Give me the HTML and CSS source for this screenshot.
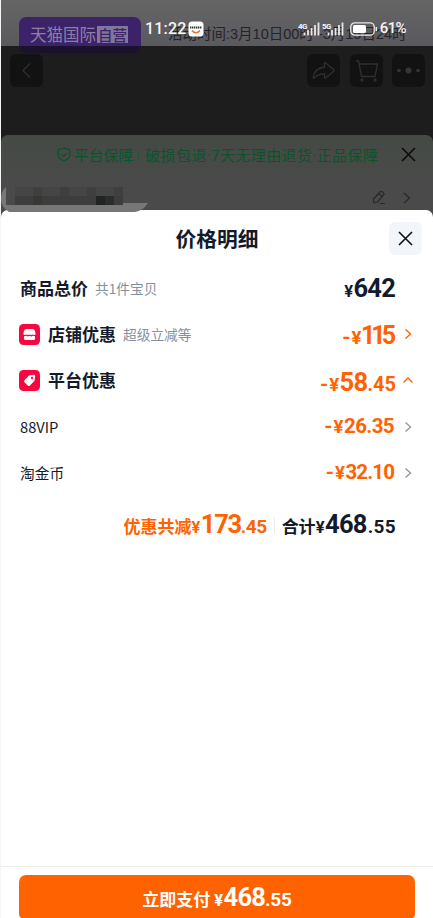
FILE: index.html
```html
<!DOCTYPE html>
<html lang="zh-CN">
<head>
<meta charset="utf-8">
<title>价格明细</title>
<link rel="stylesheet" href="styles.css">
</head>
<body>
<div class="screen">
  <div class="backdrop">
    <div class="promo">
      <div class="badge"><span>天猫国际</span><b>自营</b></div>
      <div class="promo-time">活动时间:3月10日00时 -3月15日24时</div>
    </div>
    <div class="status">
      <span class="clock">11:22</span>
      <svg class="app" width="16" height="16" viewBox="0 0 16 16"><rect x=".5" y=".5" width="15" height="15" rx="3.5" fill="#fff"/><path d="M2 6.500h12" stroke="#333" stroke-width="1.800" stroke-dasharray="1.400 .6"/><path d="M4 9.500q4 4.500 8 0" fill="none" stroke="#e87532" stroke-width="1.700"/></svg>
      <svg class="signal" width="22" height="16" viewBox="0 0 22 16"><text x="0" y="7.500">4G</text><path d="M6.500 14.500v-3M10 14.500V9M13.500 14.500V7M17 14.500V4M20.500 14.500V1.500"/></svg>
      <svg class="signal" width="22" height="16" viewBox="0 0 22 16"><text x="0" y="7.500">5G</text><path d="M6.500 14.500v-3M10 14.500V9M13.500 14.500V7M17 14.500V4M20.500 14.500V1.500"/></svg>
      <svg class="battery" width="28" height="14" viewBox="0 0 28 14"><rect x=".8" y=".8" width="23.400" height="12.400" rx="4" fill="none" stroke="#e8e8e8" stroke-width="1.300"/><rect x="3" y="3" width="13" height="8" rx="1.500" fill="#fff"/><path d="M26.300 5v4" stroke="#e8e8e8" stroke-width="1.500"/></svg>
      <span class="percent">61%</span>
    </div>
    <div class="nav">
      <span class="nav-btn back"><svg width="33" height="33" viewBox="0 0 33 33"><path d="M20 9.500l-7 7 7 7"/></svg></span>
      <span class="nav-btn"><svg width="33" height="33" viewBox="0 0 33 33"><path d="M17.500 9.500q0-1.600 1.300-.6l7.700 6.600q1 1 0 2l-7.700 6.300q-1.300 1-1.300-.6v-3.400c-4.500 0-7.500.8-10.300 4.200-.6.600-1 .3-.9-.5.500-5.500 4.500-9.500 11.200-10.500z"/></svg></span>
      <span class="nav-btn"><svg width="33" height="33" viewBox="0 0 33 33"><path d="M6 7h2.500l3 15.500H25L27.500 10H9.500"/><circle cx="12" cy="26" r="1"/><circle cx="25" cy="26" r="1"/></svg></span>
      <span class="nav-btn"><svg width="33" height="33" viewBox="0 0 33 33"><g fill="#353535" stroke="none"><circle cx="7" cy="16.500" r="1.800"/><circle cx="16.500" cy="16.500" r="3"/><circle cx="26" cy="16.500" r="1.800"/></g></svg></span>
    </div>
    <div class="panel">
      <div class="guarantee">
        <svg width="14" height="15" viewBox="0 0 14 15"><path d="M7 1L1.200 3v5c0 3 2.500 4.800 5.800 6 3.300-1.200 5.800-3 5.800-6V3z"/><path d="M4 7l2.500 2.500L10.300 6"/></svg>
        <span>平台保障</span><i></i><span class="terms">破损包退·7天无理由退货·正品保障</span>
        <svg class="close-dark" width="15" height="15" viewBox="0 0 15 15"><path d="M1 1l13 13M14 1L1 14"/></svg>
      </div>
      <div class="address">
        <div class="mosaic"><i></i><i></i><i></i><i></i><i></i><i></i><i></i><i></i><i></i><i></i><i></i><i></i><i></i><i></i><i></i><i></i><i></i><i></i><i></i><i></i><i></i><i></i><i></i><i></i></div>
        <svg width="14" height="15" viewBox="0 0 14 15"><path d="M1.500 9L8 1.800q1-1 2.200 0l1.300 1q1 1 .2 2L5.500 12l-3.800.8zM6.500 3.500l3.500 3M8 13.500h5"/></svg>
        <svg width="8" height="12" viewBox="0 0 8 12"><path d="M1 1l5.500 5L1 11"/></svg>
      </div>
      <svg class="smudge" width="147" height="25" viewBox="0 0 147 25"><path d="M5 0v16h142q-5 8-13 9H8Q0 20 0 12 0 4 5 0z" fill="#777"/></svg>
    </div>
  </div>

  <main class="sheet">
    <header class="title"><h1>价格明细</h1><button class="close"><svg width="15" height="15" viewBox="0 0 15 15"><path d="M1 1l13 13M14 1L1 14"/></svg></button></header>
    <section class="rows">
      <div class="row"><strong>商品总价</strong><small>共1件宝贝</small><div class="price dark"><span class="yen">¥</span><span class="big">642</span></div></div>
      <div class="row">
        <svg class="icon" width="21" height="21" viewBox="0 0 21 21"><rect width="21" height="21" rx="4.500" fill="#fb0540"/><path d="M7.500 5h6q2 0 2.500 2l.6 2.500q0 1.500-1.500 1.500l-1.300-.6-1.600.7-1.700-.7-1.700.7-1.600-.7-1.300.6q-1.500 0-1.500-1.500L5 7q.5-2 2.500-2zM5 12.200l2.200-.4 1.600.7 1.700-.7 1.700.7 1.600-.7 2.200.4v2.300q0 1.500-1.500 1.500h-8Q5 16 5 14.500z" fill="#fff"/></svg>
        <strong>店铺优惠</strong><small>超级立减等</small>
        <div class="price low"><span class="minus">-</span><span class="yen mid">¥</span><span class="big ones">115</span></div>
        <svg class="arrow hot" width="8" height="12" viewBox="0 0 8 12"><path d="M1.500 1.500l5 4.500-5 4.500"/></svg>
      </div>
      <div class="row">
        <svg class="icon" width="21" height="21" viewBox="0 0 21 21"><rect width="21" height="21" rx="4.500" fill="#fb0540"/><path fill-rule="evenodd" d="M10.800 5.200l4-.4q1.300 0 1.300 1.300l-.4 4q0 .6-.6 1.100l-4.200 4.200q-1.200 1-2.300 0l-3-3q-1-1.200 0-2.300l4.200-4.300q.4-.5 1-.6zM13 6.800a1.200 1.200 0 1 0 .1 0z" fill="#fff"/></svg>
        <strong>平台优惠</strong>
        <div class="price low"><span class="minus">-</span><span class="yen mid">¥</span><span class="big">58</span><span class="cents">.45</span></div>
        <svg class="arrow hot up" width="12" height="8" viewBox="0 0 12 8"><path d="M1.500 6.500L6 2l4.500 4.500"/></svg>
      </div>
      <div class="row"><span class="name">88VIP</span><div class="price"><span class="minus">-</span><span class="yen mid">¥</span><span class="plain">26.35</span></div><svg class="arrow far" width="8" height="12" viewBox="0 0 8 12"><path d="M1.500 1.500l5 4.500-5 4.500"/></svg></div>
      <div class="row"><span class="name">淘金币</span><div class="price"><span class="minus">-</span><span class="yen mid">¥</span><span class="plain tight">32.10</span></div><svg class="arrow far" width="8" height="12" viewBox="0 0 8 12"><path d="M1.500 1.500l5 4.500-5 4.500"/></svg></div>
    </section>
    <div class="total">
      <div class="price"><strong>优惠共减</strong><span class="yen">¥</span><span class="big">173</span><span class="cents">.45</span></div>
      <i></i>
      <div class="price dark"><strong>合计</strong><span class="yen">¥</span><span class="big">468</span><span class="cents">.55</span></div>
    </div>
    <footer class="bar"><button class="pay"><span class="price white"><strong>立即支付</strong><span class="yen">¥</span><span class="big">468</span><span class="cents">.55</span></span></button></footer>
  </main>
</div>
</body>
</html>
```
FILE: styles.css
```css
* { box-sizing: border-box; }
body { margin: 0; background: #f5f5f5; color: #131a2c; font-family: "Noto Sans CJK SC", sans-serif; }
h1 { margin: 0; }
button { border: 0; padding: 0; font: inherit; }
svg { display: block; flex: none; }
.screen { height: 918px; padding-left: 1px; overflow: hidden; display: flex; flex-direction: column; background: linear-gradient(#4a4a4a 230px, #fff 230px) content-box; }

/* Dimmed page behind the sheet */
.backdrop { position: relative; z-index: 1; height: 210px; flex: none; background: #1d1d1d; }
.promo { height: 46px; padding: 17px 0 0 18px; display: flex; background: linear-gradient(#656565, #5a595e); }
.badge { width: 122px; height: 36px; flex: none; border-radius: 7px; display: flex; justify-content: center; align-items: center; gap: 1px; background: linear-gradient(#3c2269 0 29px, #1b122c 29px); color: #8c80a8; font-size: 16.500px; line-height: 34px; }
.badge span { margin: -2px 0 0 -2px; }
.badge b { padding: 0 1px; background: #81769b; color: #3c2269; font-size: 14.500px; line-height: 17px; font-weight: 500; margin-top: -1px; }
.promo-time { margin-left: 27px; color: #242329; font: 14.500px/34px "Liberation Sans", "Noto Sans CJK SC", sans-serif; white-space: nowrap; }
.status { position: absolute; inset: 20px 27px auto 144px; height: 17px; display: flex; align-items: center; color: #f5f5f5; }
.clock, .percent { font: 500 16px/17px Roboto, sans-serif; }
.clock { width: 43px; letter-spacing: .2px; }
.app { margin-right: 94px; }
.signal { margin-right: 2px; fill: none; stroke: #e8e8e8; stroke-width: 1.800; }
.signal text { font: 700 8px Roboto, sans-serif; letter-spacing: -.5px; fill: #f5f5f5; stroke: none; }
.battery { margin-left: 4px; }
.percent { margin-left: 2px; font-size: 15px; letter-spacing: -.6px; }
.nav { height: 89px; padding: 8px 8px 0 9px; display: flex; gap: 9.500px; }
.nav-btn { width: 33px; height: 33px; border-radius: 6px; background: #121212; }
.nav-btn svg { fill: none; stroke: #303030; stroke-width: 1.300; }
.back { margin-right: auto; }
.panel { position: relative; height: 75px; border-radius: 7px 7px 0 0; background: linear-gradient(#454a45, #484a48 30px, #4a4a4a 60px); }
.guarantee { height: 39px; padding: 0 17px 0 56px; display: flex; align-items: center; color: #0b532c; font-size: 14.800px; white-space: nowrap; }
.guarantee svg { fill: none; stroke: #0b532c; stroke-width: 1.300; }
.guarantee span { margin-left: 3px; }
.guarantee .terms { font-family: Roboto, "Noto Sans CJK SC", sans-serif; font-size: 14.900px; letter-spacing: .5px; }
.guarantee i { width: 1px; height: 11px; margin: 0 3px 0 5px; background: #25543a; }
.guarantee .close-dark { margin-left: auto; stroke: #0b0b0b; stroke-width: 1.600; }
.address { position: relative; z-index: 1; height: 47px; padding: 0 22px 0 14px; display: flex; align-items: center; gap: 17px; }
.address svg { fill: none; stroke: #292929; stroke-width: 1.200; }
.mosaic { width: 108px; height: 18px; margin: -3px auto 0 0; display: grid; grid-template-columns: repeat(12, 9px); background: #444544; box-shadow: -9px 0 #4a4a4a; }
.mosaic i:nth-child(3n) { background: #3f403d; }
.mosaic i:nth-child(n+13) { background: #3c3d3c; }
.mosaic i:nth-child(15) { background: #373834; }
.mosaic i:nth-child(22) { background: #202321; }
.mosaic i:nth-child(23) { background: #2b2d2a; }
.smudge { position: absolute; left: 0; top: 52px; }

/* Price sheet */
.sheet { flex: 1; display: flex; flex-direction: column; background: #fff; border-radius: 7px 7px 0 0; }
.title { height: 56px; display: grid; grid-template-columns: 1fr auto 1fr; align-items: center; padding-right: 11px; padding-left: 11px; }
.title h1 { grid-column: 2; font-size: 20.700px; line-height: 30px; font-weight: 700; margin-top: -1px; }
.close { width: 33px; height: 33px; border-radius: 6px; background: #f2f5f9; display: grid; place-items: center; justify-self: end; }
.close svg { stroke: #111; stroke-width: 1.600; }
.rows { margin-top: -1px; padding: 0 20px 0 19px; }
.row { height: 46.200px; display: flex; align-items: center; }
.row strong, .price strong { font-size: 17px; line-height: 24px; font-weight: 700; }
.row small { margin-left: 7px; color: #8590a2; font-size: 13.700px; }
.icon { margin-left: -1px; margin-right: 8px; }
.name { font-size: 14.700px; }
.price { margin-left: auto; display: flex; align-items: baseline; color: #ff6200; font-family: Roboto, "Noto Sans CJK SC", sans-serif; font-weight: 700; line-height: 30px; white-space: nowrap; }
.price strong { font-family: "Noto Sans CJK SC", sans-serif; }
.row > .price.dark { margin-right: 18px; padding-top: 3px; }
.row > .low { padding-top: 6px; }
.price.dark { color: #131a2c; }
.price.white { color: #fff; margin: 0; padding-top: 4px; }
.price.white strong { margin-right: 4px; }
.yen { font-size: 16.500px; margin-right: .5px; }
.mid { font-size: 18.500px; }
.minus { font-size: 21px; margin-right: 1px; }
.big { font-size: 25.500px; letter-spacing: -.8px; }
.ones { font-size: 25px; letter-spacing: -4px; margin: 0 3px 0 -1px; }
.cents { font-size: 19px; letter-spacing: -.2px; }
.low .cents { font-size: 20px; letter-spacing: 0; }
.plain { font-size: 20.500px; letter-spacing: -.6px; }
.tight { letter-spacing: -.9px; }
.arrow { margin-left: 9px; margin-right: 1px; fill: none; stroke: #999; stroke-width: 1.400; }
.far { margin-left: 10px; }
.hot { stroke: #ff6200; }
.up { margin-left: 6px; margin-right: -1px; }
.total { height: 56px; padding: 4px 37px 0 0; display: flex; align-items: center; }
.total i { width: 1px; height: 17px; margin: 0 7px; background: #e9ebef; }
.total .big { letter-spacing: -1.300px; }
.total .cents { letter-spacing: -.5px; }
.total .dark { margin-left: 0; }
.total .dark .big { letter-spacing: -.7px; }
.total .dark .cents { margin-left: 1px; letter-spacing: .3px; }
.bar { height: 52px; margin-top: auto; padding: 8px 18px 0; border-top: 1px solid #eee; }
.pay { width: 100%; height: 44px; border-radius: 7px 7px 5px 5px; background: #ff6200; display: flex; justify-content: center; align-items: center; }
```
